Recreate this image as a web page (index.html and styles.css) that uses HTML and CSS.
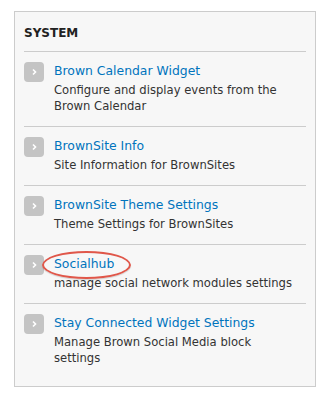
FILE: index.html
```html
<!DOCTYPE html>
<html lang="en">

<head>
  <meta charset="UTF-8" />
  <meta name="viewport" content="width=device-width, initial-scale=1.0" />
  <title>System</title>

  <link rel="stylesheet" href="styles.css">
</head>

<body>
  <div class="panel">
    <h3>System</h3>

    <ul class="admin-list">
      <li>
        <span class="arrow"><svg width="20" height="20" viewBox="0 0 20 20"><path d="M9 7.5l2.5 2.5L9 12.5" fill="none" stroke="#fff" stroke-width="1.6" /></svg></span>
        <div class="item">
          <a href="#">Brown Calendar Widget</a>
          <p>Configure and display events from the Brown Calendar</p>
        </div>
      </li>
      <li>
        <span class="arrow"><svg width="20" height="20" viewBox="0 0 20 20"><path d="M9 7.5l2.5 2.5L9 12.5" fill="none" stroke="#fff" stroke-width="1.6" /></svg></span>
        <div class="item">
          <a href="#">BrownSite Info</a>
          <p>Site Information for BrownSites</p>
        </div>
      </li>
      <li>
        <span class="arrow"><svg width="20" height="20" viewBox="0 0 20 20"><path d="M9 7.5l2.5 2.5L9 12.5" fill="none" stroke="#fff" stroke-width="1.6" /></svg></span>
        <div class="item">
          <a href="#">BrownSite Theme Settings</a>
          <p>Theme Settings for BrownSites</p>
        </div>
      </li>
      <li>
        <span class="arrow"><svg width="20" height="20" viewBox="0 0 20 20"><path d="M9 7.5l2.5 2.5L9 12.5" fill="none" stroke="#fff" stroke-width="1.6" /></svg></span>
        <div class="item">
          <a href="#" class="circled">Socialhub</a>
          <p>manage social network modules settings</p>
        </div>
      </li>
      <li>
        <span class="arrow"><svg width="20" height="20" viewBox="0 0 20 20"><path d="M9 7.5l2.5 2.5L9 12.5" fill="none" stroke="#fff" stroke-width="1.6" /></svg></span>
        <div class="item">
          <a href="#">Stay Connected Widget Settings</a>
          <p>Manage Brown Social Media block settings</p>
        </div>
      </li>
    </ul>
  </div>
</body>

</html>
```

FILE: styles.css
```css
* {
  font-family: "DejaVu Sans", sans-serif;
  box-sizing: border-box;
}

body {
  margin: 0;
  padding: 11px 8px 0 14px;
  background-color: #fff;
}

.panel {
  width: 302px;
  height: 376px;
  border: 1px solid #ccc;
  background-color: #f7f7f7;
  padding: 0 9px;
}

h3 {
  margin: 0;
  padding: 13px 0 10px;
  font-size: 12px;
  line-height: 16px;
  font-weight: bold;
  text-transform: uppercase;
  color: #222;
  border-bottom: 1px solid #ccc;
}

.admin-list {
  list-style: none;
  margin: 0;
  padding: 0;
}

.admin-list li {
  display: flex;
  gap: 10px;
  padding: 10px 10px 12px 0;
  border-bottom: 1px solid #ccc;
}

.admin-list li:last-child {
  border-bottom: none;
}

.arrow {
  flex: none;
  width: 20px;
  height: 20px;
  border-radius: 4px;
  background-color: #c4c4c4;
}

.arrow svg {
  display: block;
}

.item {
  font-size: 12px;
  line-height: 16px;
}

.item a {
  position: relative;
  display: block;
  width: fit-content;
  font-size: 12.4px;
  line-height: 18px;
  color: #0074bd;
  text-decoration: none;
}

.item p {
  margin: 2px 0 0;
  font-size: 11.6px;
  line-height: 16px;
  color: #333;
}

.circled::after {
  content: "";
  position: absolute;
  left: -12px;
  top: -4px;
  width: 85px;
  height: 24px;
  border: 2.5px solid #e0574a;
  border-radius: 50%;
  box-shadow: 0 1px 1px rgba(0, 0, 0, 0.15);
}
```
